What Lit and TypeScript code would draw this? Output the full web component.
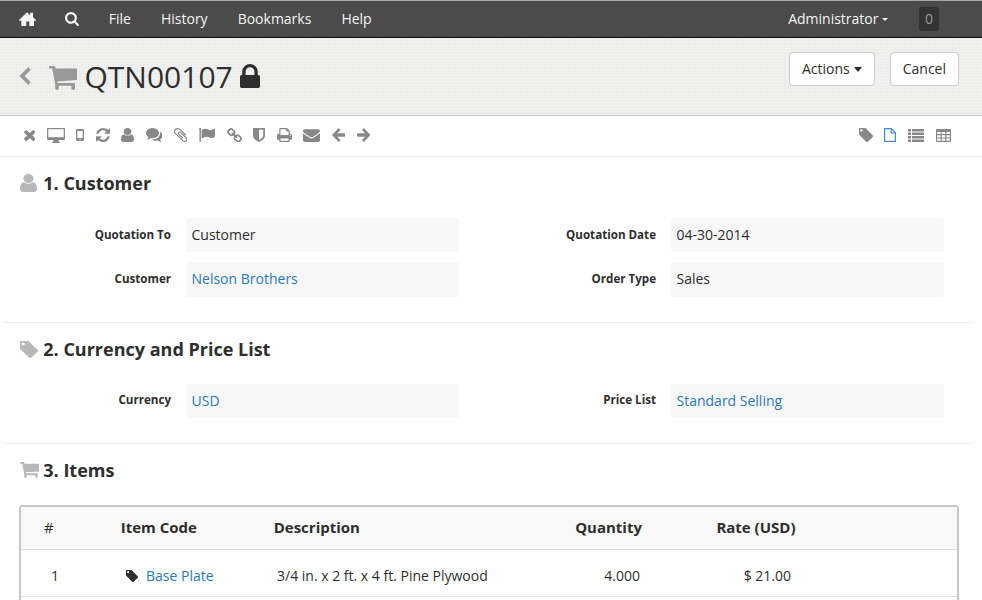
import { LitElement, html, css, svg } from "lit";
import { customElement, property } from "lit/decorators.js";

interface Glyph { box: string; body: unknown; }
const p = (box: string, d: string): Glyph => ({ box, body: svg`<path fill-rule="evenodd" d=${d}></path>` });

const glyphs: Record<string, Glyph> = {
  home: p("0 0 17 14", "M8 0.300 L11.200 3.200 V0.800 H14 V5.300 L17 8 V8.800 H15 V13.300 Q15 14 14.300 14 H10.300 V9.400 H7.300 V14 H3.200 Q2.300 14 2.300 13.300 V8.800 H0 V8 Z"),
  search: p("64 128 1664 1664", "M1216 832q0-185-131.500-316.500t-316.500-131.500-316.500 131.500-131.500 316.500 131.500 316.500 316.500 131.500 316.500-131.500 131.500-316.500zm512 832q0 52-38 90t-90 38q-54 0-90-38l-343-342q-179 124-399 124-143 0-273.500-55.500t-225-150-150-225-55.500-273.500 55.500-273.500 150-225 225-150 273.500-55.500 273.500 55.500 225 150 150 225 55.500 273.500q0 220-124 399l343 343q37 37 37 90z"),
  chevron: p("0 0 12 18", "M9.200 0.200 L11.800 2.800 L5.600 9 L11.800 15.200 L9.200 17.800 L0.400 9 Z"),
  cart: p("0 0 28 24", "M0.600 0H5Q5.900 0 6.200 1L6.700 2.500H27.300Q28 2.500 28 3.200V13.200Q28 14 27.200 14.100L8.200 15.500 8.600 17H25.200Q26 17 26 17.800V22.600Q26 24 24.200 24 22.400 24 22.400 22.600V19.800H9.700V22.600Q9.700 24 7.900 24 6.200 24 6.200 22.600V18.300L3.400 3.200 3.200 2.500H0.600Q0 2.500 0 1.200 0 0 0.600 0Z"),
  lock: p("320 128 1152 1408", "M640 768h512v-192q0-106-75-181t-181-75-181 75-75 181v192zm832 96v576q0 40-28 68t-68 28h-960q-40 0-68-28t-28-68v-576q0-40 28-68t68-28h32v-192q0-184 132-316t316-132 316 132 132 316v192h32q40 0 68 28t28 68z"),
  times: p("302 238 1188 1316", "M1490 1322q0 40-28 68l-136 136q-28 28-68 28t-68-28l-294-294-294 294q-28 28-68 28t-68-28l-136-136q-28-28-28-68t28-68l294-294-294-294q-28-28-28-68t28-68l136-136q28-28 68-28t68 28l294 294 294-294q28-28 68-28t68 28l136 136q28 28 28 68t-28 68l-294 294 294 294q28 28 28 68z"),
  desktop: p("0 0 18 15", "M1 0H17Q18 0 18 1V11Q18 12 17 12H11.500V13.300Q12.800 13.600 12.800 14.300V15H5.200V14.300Q5.200 13.600 6.500 13.300V12H1Q0 12 0 11V1Q0 0 1 0ZM1.300 1.300V9.200H16.700V1.300Z"),
  mobile: p("0 0 8 12", "M1.300 0H6.700Q8 0 8 1.300V10.700Q8 12 6.700 12H1.300Q0 12 0 10.700V1.300Q0 0 1.300 0ZM1.300 2V9H6.700V2ZM4 9.900A.7.7 0 1 0 4 11.300A.7.7 0 1 0 4 9.900Z"),
  refresh: p("128 128 1536 1536", "M1639 1056q0 5-1 7-64 268-268 434.500t-478 166.500q-146 0-282.500-55t-243.500-157l-129 129q-19 19-45 19t-45-19-19-45v-448q0-26 19-45t45-19h448q26 0 45 19t19 45-19 45l-137 137q71 66 161 102t187 36q134 0 250-65t186-179q11-17 53-117 8-23 30-23h192q13 0 22.500 9.500t9.500 22.500zm25-800v448q0 26-19 45t-45 19h-448q-26 0-45-19t-19-45 19-45l138-138q-148-137-349-137-134 0-250 65t-186 179q-11 17-53 117-8 23-30 23h-199q-13 0-22.500-9.500t-9.500-22.500v-7q65-268 270-434.500t480-166.500q146 0 284 55.500t245 156.500l130-129q19-19 45-19t45 19 19 45z"),
  user: p("256 128 1280 1536", "M1536 1399q0 109-62.500 187t-150.500 78h-854q-88 0-150.500-78t-62.500-187q0-85 8.500-160.500t31.500-152 58.500-131 94-89 134.500-34.500q131 128 313 128t313-128q76 0 134.500 34.500t94 89 58.500 131 31.500 152 8.500 160.500zm-256-887q0 159-112.500 271.500t-271.500 112.500-271.500-112.500-112.500-271.500 112.500-271.500 271.500-112.500 271.500 112.500 112.500 271.500z"),
  comments: p("0 256 1792 1408", "M1408 768q0 139-94 257t-256.500 186.500-353.500 68.500q-86 0-176-16-124 88-278 128-36 9-86 16h-3q-11 0-20.500-8t-11.500-21q-1-3-1-6.500t.5-6.500 2-6l2.500-5 3.500-5.500 4-5 4.500-5 4-4.500q5-6 23-25t26-29.500 22.500-29 25-38.500 20.500-44q-124-72-195-177t-71-224q0-139 94-257t256.500-186.500 353.500-68.500 353.500 68.500 256.500 186.500 94 257zm384 256q0 120-71 224.500t-195 176.500q10 24 20.500 44t25 38.500 22.500 29 26 29.500 23 25q1 1 4 4.500t4.500 5 4 5 3.500 5.500l2.500 5 2 6 .5 6.500-1 6.500q-3 14-13 22t-22 7q-50-7-86-16-154-40-278-128-90 16-176 16-271 0-472-132 58 4 88 4 161 0 309-45t264-129q125-92 192-212t67-254q0-77-23-152 129 71 204 178t75 230z"),
  clip: p("196 128 1400 1536", "M1596 1385q0 117-79 196t-196 79q-135 0-235-100l-777-776q-113-115-113-271 0-159 110-270t269-111q158 0 273 113l605 606q10 10 10 22 0 16-30.500 46.500t-46.500 30.500q-13 0-23-10l-606-607q-79-77-181-77-106 0-179 75t-73 181q0 105 76 181l776 777q63 63 145 63 64 0 106-42t42-106q0-82-63-145l-581-581q-26-24-60-24-29 0-48 19t-19 48q0 32 25 59l410 410q10 10 10 22 0 16-31 47t-47 31q-12 0-22-10l-410-410q-63-61-63-149 0-82 57-139t139-57q88 0 149 63l581 581q100 98 100 235z"),
  flag: p("0 0 17 14", "M1.200 0A1.200 1.200 0 0 1 1.900 2.200V13.500Q1.900 14 1.400 14H1Q.5 14 .5 13.500V2.200A1.200 1.200 0 0 1 1.200 0ZM2.700 2.200Q5 .8 7 .8 8.500 .8 10.300 1.700 12.300 2.500 16 .7 16.800 .5 16.800 1.200V8.600Q14.500 10 12.700 10 11.400 10 9.700 9.100 7.500 8 2.700 10.400Z"),
  link: p("80 16 1632 1632", "M1520 1216q0-40-28-68l-208-208q-28-28-68-28-42 0-72 32 3 3 19 18.500t21.500 21.500 15 19 13 25.500 3.500 27.500q0 40-28 68t-68 28q-15 0-27.500-3.500t-25.500-13-19-15-21.500-21.500-18.500-19q-33 31-33 73 0 40 28 68l206 207q27 27 68 27 40 0 68-26l147-146q28-28 28-67zm-703-705q0-40-28-68l-206-207q-28-28-68-28-39 0-68 27l-147 146q-28 28-28 67 0 40 28 68l208 208q27 27 68 27 42 0 72-31-3-3-19-18.500t-21.500-21.500-15-19-13-25.500-3.500-27.500q0-40 28-68t68-28q15 0 27.500 3.500t25.500 13 19 15 21.500 21.500 18.500 19q33-31 33-73zm895 705q0 120-85 203l-147 146q-83 83-203 83-121 0-204-85l-206-207q-83-83-83-203 0-123 88-209l-88-88q-86 88-208 88-120 0-204-84l-208-208q-84-84-84-204t85-203l147-146q83-83 203-83 121 0 204 85l206 207q83 83 83 203 0 123-88 209l88 88q86-88 208-88 120 0 204 84l208 208q84 84 84 204z"),
  shield: p("256 128 1280 1536", "M1344 960v-640h-448v1137q119-63 213-137 235-184 235-360zm192-768v768q0 86-33.500 170.500t-83 150-118 127.500-126.500 103-121 77.500-89.500 49.500-42.500 20q-12 6-26 6t-26-6q-16-7-42.500-20t-89.500-49.500-121-77.500-126.500-103-118-127.500-83-150-33.500-170.500v-768q0-26 19-45t45-19h1152q26 0 45 19t19 45z"),
  print: p("64 128 1664 1536", "M448 1536h896v-256h-896v256zm0-640h896v-384h-160q-40 0-68-28t-28-68v-160h-640v640zm1152 64q0-26-19-45t-45-19-45 19-19 45 19 45 45 19 45-19 19-45zm128 0v416q0 13-9.500 22.500t-22.500 9.500h-224v160q0 40-28 68t-68 28h-960q-40 0-68-28t-28-68v-160h-224q-13 0-22.500-9.500t-9.500-22.500v-416q0-79 56.500-135.500t135.500-56.500h64v-544q0-40 28-68t68-28h672q40 0 88 20t76 48l152 152q28 28 48 76t20 88v256h64q79 0 135.500 56.500t56.500 135.500z"),
  mail: p("0 234 1792 1430", "M1792 710v794q0 66-47 113t-113 47h-1472q-66 0-113-47t-47-113v-794q44 49 101 87 362 246 497 345 57 42 92.500 65.500t94.500 48 110 24.500h2q51 0 110-24.500t94.500-48 92.500-65.500q170-123 498-345 57-39 100-87zm0-294q0 79-49 151t-122 123q-376 261-468 325-10 7-42.500 31t-54 38.500-52 32.500-57.500 27-50 9h-2q-23 0-50-9t-57.500-27-52-32.500-54-38.500-42.500-31q-91-64-262-182.500t-205-142.500q-62-42-117-115.500t-55-136.500q0-78 41.500-130t118.500-52h1472q65 0 112.500 47t47.500 113z"),
  left: p("0 0 14 14", "M8.800 2 5.500 5.300H13Q14 5.300 14 6.300V7.700Q14 8.700 13 8.700H5.500L8.800 12 6.900 14 0 7 6.900 0Z"),
  right: p("0 0 14 14", "M5.200 2 8.500 5.300H1Q0 5.300 0 6.300V7.700Q0 8.700 1 8.700H8.500L5.200 12 7.100 14 14 7 7.100 0Z"),
  tag: p("192 192 1451 1451", "M576 448q0-53-37.500-90.500t-90.500-37.500-90.500 37.500-37.500 90.500 37.500 90.500 90.500 37.500 90.500-37.500 37.500-90.500zm1067 576q0 53-37 90l-491 492q-39 37-91 37-53 0-90-37l-715-716q-38-37-64.500-101t-26.500-117v-416q0-52 38-90t90-38h416q53 0 117 26.500t102 64.500l715 714q37 39 37 91z"),
  file: p("0 0 12 14", "M1 0H7.600L12 4.400V13Q12 14 11 14H1Q0 14 0 13V1Q0 0 1 0ZM1.200 1.200V12.800H10.800V5.500H7.500Q6.600 5.500 6.600 4.600V1.200ZM7.800 1.800V4.300H10.400Z"),
  list: p("0 0 16 13", "M0 0H3V2.500H0ZM4 0H16V2.500H4ZM0 3.500H3V6H0ZM4 3.500H16V6H4ZM0 7H3V9.500H0ZM4 7H16V9.500H4ZM0 10.500H3V13H0ZM4 10.500H16V13H4Z"),
  table: p("0 0 15 13", "M1 0H14Q15 0 15 1V12Q15 13 14 13H1Q0 13 0 12V1Q0 0 1 0ZM1.200 3V5.100H4.600V3ZM5.800 3V5.100H9.200V3ZM10.400 3V5.100H13.800V3ZM1.200 6.300V8.400H4.600V6.300ZM5.800 6.300V8.400H9.200V6.300ZM10.400 6.300V8.400H13.800V6.300ZM1.200 9.600V11.800H4.600V9.600ZM5.800 9.600V11.800H9.200V9.600ZM10.400 9.600V11.800H13.800V9.600Z"),
};

@customElement("ui-icon")
class UiIcon extends LitElement {
  @property() name = "tag";
  @property({ type: Number }) w = 14;
  @property({ type: Number }) h = 14;
  static styles = css`
    :host { display: block; flex: none; line-height: 0; }
    svg { display: block; fill: currentColor; }
  `;
  render() {
    const g = glyphs[this.name];
    return html`<svg width=${this.w} height=${this.h} viewBox=${g.box} preserveAspectRatio="none">${g.body}</svg>`;
  }
}

const tools: [string, number, number][] = [
  ["times", 11.5, 12], ["desktop", 18, 15], ["mobile", 8, 12], ["refresh", 14, 14], ["user", 13, 14],
  ["comments", 16.500, 14], ["clip", 13.500, 14], ["flag", 16.500, 14], ["link", 15, 14.500], ["shield", 12, 14],
  ["print", 15, 14], ["mail", 17, 13], ["left", 13.500, 14], ["right", 13.500, 14],
];

@customElement("app-root")
class AppRoot extends LitElement {
  static styles = css`
    :host { display: block; height: 600px; overflow: hidden; background: #fff; color: #2e2e2e;
      font: 14px/20px "Open Sans", sans-serif; }
    * { box-sizing: border-box; }
    .nav { height: 38px; background: #4b4b4b; border-top: 1px solid #a3a7a6; border-bottom: 1px solid #111;
      display: flex; align-items: center; padding: 0 43px 0 19px; color: #f4f4f4; }
    .search { margin: 0 29.8px 0 29px; }
    .menu { display: flex; gap: 30px; flex: 1; }
    .admin { display: flex; align-items: center; gap: 3.5px; margin-right: 31px; }
    .caret { border: 3px solid transparent; border-top-color: currentColor; border-bottom: 0; }
    .count { width: 20px; height: 24px; line-height: 24px; text-align: center; background: #333; color: #999; border-radius: 3px; }
    .head { height: 78px; border-bottom: 1px solid #c7c7c7; display: flex; padding: 0 23px 0 19px;
      background: repeating-linear-gradient(0deg, rgba(255,255,255,.22) 0 1px, transparent 1px 3px),
        repeating-linear-gradient(90deg, rgba(255,255,255,.22) 0 1px, transparent 1px 3px), #ececeb; }
    .title { display: flex; align-items: center; flex: 1; font-size: 30px; line-height: 40px; color: #2e2e2e; }
    .title .gray { color: #999; }
    .title .chevron { margin-bottom: 1px; }
    .title .cart { margin: 2px 7.5px 0 18px; }
    .title .lock { margin: 0 0 2px 7.4px; }
    .buttons { display: flex; gap: 15px; padding-top: 14px; }
    .btn { height: 34px; border: 1px solid #ccc; border-radius: 4px; background: #fff; padding: 6px 12px;
      display: flex; align-items: center; gap: 4px; }
    .btn .caret { border-width: 5px 4.5px 0; }
    .tools { height: 41px; border-bottom: 1px solid #eee; display: flex; align-items: center; color: #888;
      padding: 0 31px 2px 23.5px; gap: 11.5px; }
    .tools .views { display: flex; align-items: center; gap: 12px; margin-left: auto; }
    .views ui-icon:first-child { margin-right: -.7px; }
    .views .on { color: #428bca; }
    .section { margin: 0 8px 0 4px; padding: 15px 15px 0 16px; border-bottom: 1px solid #eee; }
    .one { height: 166px; } .two { height: 121px; } .three { border: 0; }
    h4 { display: flex; align-items: center; margin: 0; height: 22px; font-size: 18px; line-height: 22px; font-weight: 700; }
    h4 ui-icon { color: #b8b8b8; }
    .mark { width: 23.3px; }
    .fields { display: grid; grid-template-columns: 439px 440px; column-gap: 45px; row-gap: 10px; padding-top: 24px; }
    .field { display: grid; grid-template-columns: 151px 273px; column-gap: 15px; }
    .field:nth-child(even) { grid-template-columns: 152px 273px; }
    .label { text-align: right; font-size: 11.6px; font-weight: 700; padding-top: 6.5px; }
    .value { height: 34px; padding: 7px 5.5px; background: #f7f7f7; border-radius: 3px; }
    .field:nth-child(n + 3) .value { height: 35px; }
    .field:nth-child(n + 3) .label { padding-top: 7px; }
    .two .label { padding-top: 5.5px; }
    .link { color: #2a7ab8; }
    .grid { margin: 24px 0 0 -1px; border: 2px solid #c7c7c7; border-radius: 4px 4px 0 0; height: 200px; }
    .row { display: grid; border-bottom: 1px solid #ddd; align-items: center; }
    .hd { height: 43px; background: #f9f9f9; font-size: 15px; font-weight: 700; padding: 0 0 2px 23px;
      grid-template-columns: 76.7px 153px 250.3px 118px 153.5px; }
    .bd { height: 47px; padding: 5px 0 0 30px; grid-template-columns: 75px 20px 131px 240px 123px 151px; }
    .num { text-align: right; }
    .hash { font-weight: 400; }
  `;

  field(label: string, value: string, link = false) {
    return html`<div class="field"><div class="label">${label}</div><div class="value ${link ? "link" : ""}">${value}</div></div>`;
  }

  render() {
    return html`
      <nav class="nav">
        <ui-icon name="home" w="17" h="14"></ui-icon>
        <ui-icon class="search" name="search" w="14" h="14"></ui-icon>
        <div class="menu"><span>File</span><span>History</span><span>Bookmarks</span><span>Help</span></div>
        <div class="admin">Administrator<i class="caret"></i></div>
        <div class="count">0</div>
      </nav>
      <header class="head">
        <div class="title">
          <ui-icon class="gray chevron" name="chevron" w="12" h="18"></ui-icon>
          <ui-icon class="gray cart" name="cart" w="28" h="24"></ui-icon>
          <span>QTN00107</span>
          <ui-icon class="lock" name="lock" w="20" h="24"></ui-icon>
        </div>
        <div class="buttons"><div class="btn">Actions<i class="caret"></i></div><div class="btn">Cancel</div></div>
      </header>
      <div class="tools">
        ${tools.map(([n, w, h]) => html`<ui-icon name=${n} w=${w} h=${h}></ui-icon>`)}
        <div class="views">
          <ui-icon name="tag" w="14" h="14"></ui-icon>
          <ui-icon class="on" name="file" w="12" h="14"></ui-icon>
          <ui-icon name="list" w="16" h="13"></ui-icon>
          <ui-icon name="table" w="15" h="13"></ui-icon>
        </div>
      </div>
      <section class="section one">
        <h4><div class="mark"><ui-icon name="user" w="17" h="18"></ui-icon></div>1. Customer</h4>
        <div class="fields">
          ${this.field("Quotation To", "Customer")}${this.field("Quotation Date", "04-30-2014")}
          ${this.field("Customer", "Nelson Brothers", true)}${this.field("Order Type", "Sales")}
        </div>
      </section>
      <section class="section two">
        <h4><div class="mark"><ui-icon name="tag" w="18" h="17"></ui-icon></div>2. Currency and Price List</h4>
        <div class="fields">
          ${this.field("Currency", "USD", true)}${this.field("Price List", "Standard Selling", true)}
        </div>
      </section>
      <section class="section three">
        <h4><div class="mark"><ui-icon name="cart" w="19" h="16"></ui-icon></div>3. Items</h4>
        <div class="grid">
          <div class="row hd"><span class="hash">#</span><span>Item Code</span><span>Description</span><span class="num">Quantity</span><span class="num">Rate (USD)</span></div>
          <div class="row bd"><span>1</span><ui-icon name="tag" w="12" h="12"></ui-icon><span class="link">Base Plate</span><span>3/4 in. x 2 ft. x 4 ft. Pine Plywood</span><span class="num">4.000</span><span class="num">$ 21.00</span></div>
        </div>
      </section>
    `;
  }
}
